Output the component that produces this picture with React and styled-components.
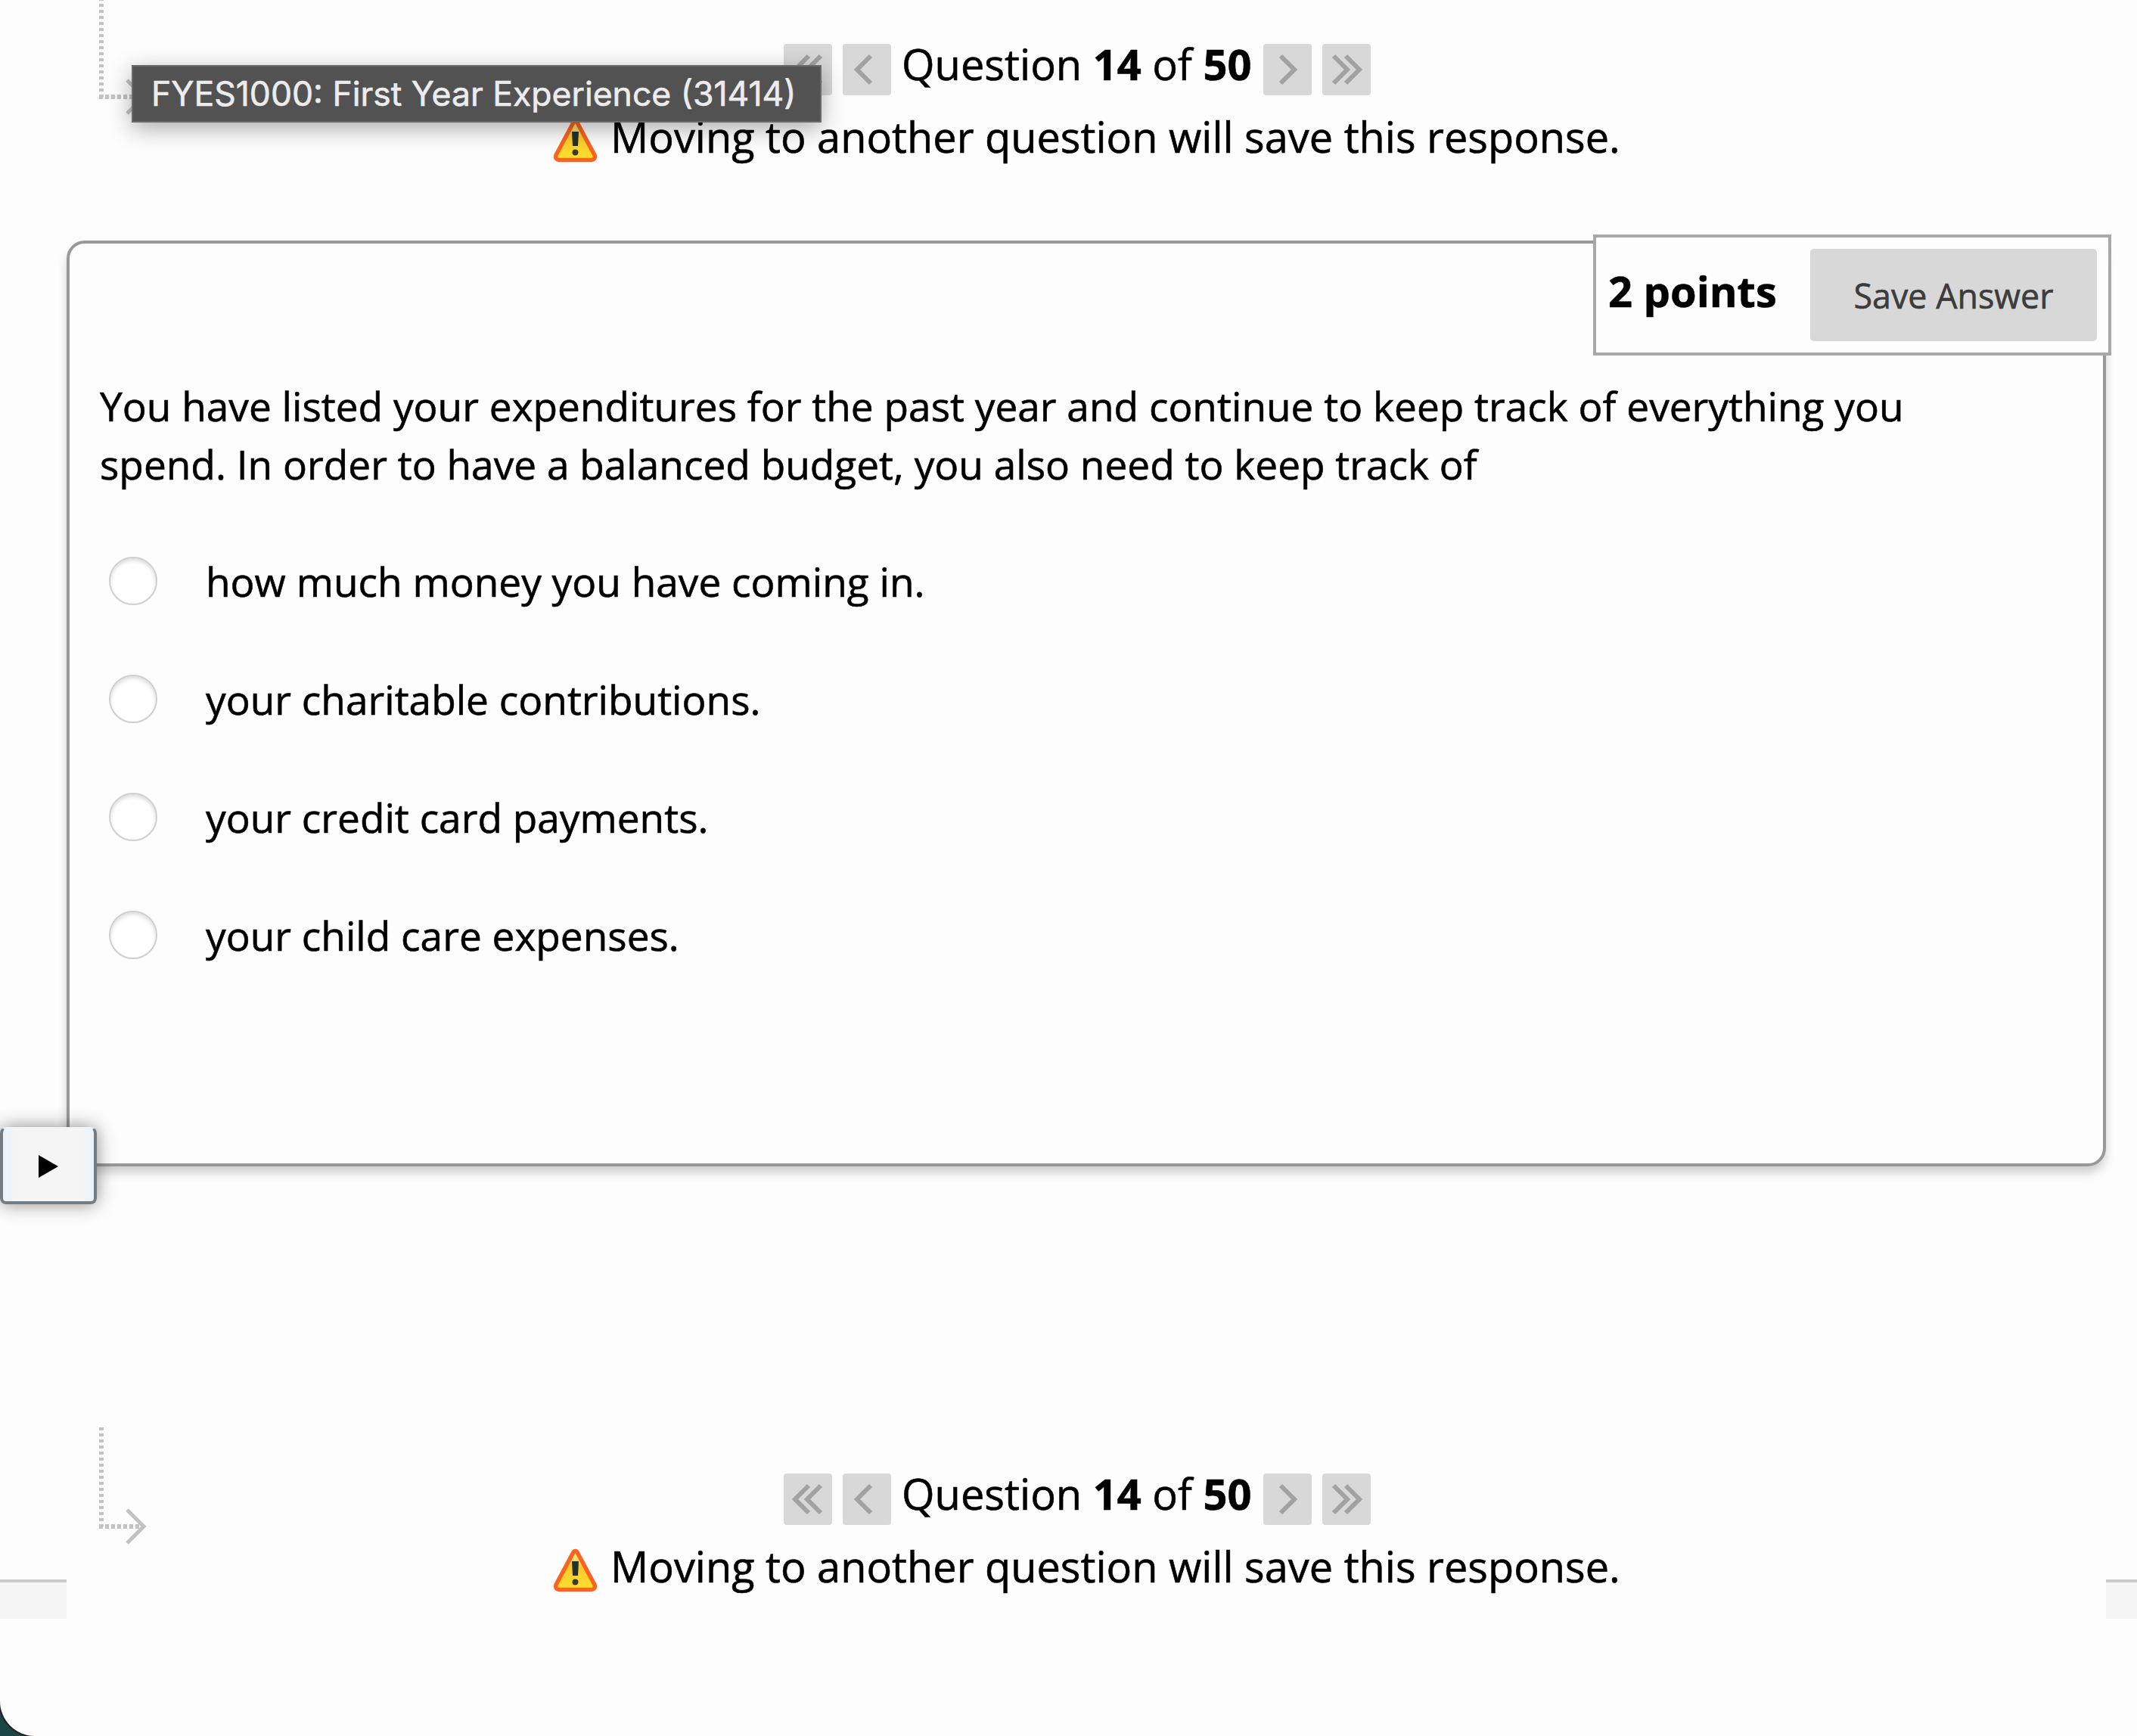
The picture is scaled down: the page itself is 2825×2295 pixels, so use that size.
import styled, { createGlobalStyle } from "styled-components";

const GlobalStyle = createGlobalStyle`
  * { box-sizing: border-box; }
  body {
    margin: 0;
    background: #1c4646;
    font-family: "Open Sans", "Noto Sans", sans-serif;
    font-size: 56px;
    color: #000;
    -webkit-text-stroke: 0.6px currentColor;
  }
`;

const Page = styled.div`
  position: relative;
  width: 2825px;
  height: 2295px;
  padding-top: 58px;
  background: #fdfdfd;
  border-bottom-left-radius: 46px;
  box-shadow: 0 0 0 2px #221c24;
  overflow: hidden;
`;

const Navigation = styled.nav`
  position: relative;
  height: 166px;
`;

const Arrow = styled.svg`
  position: absolute;
  left: 128px;
  top: -61px;
`;

const Pager = styled.div`
  display: flex;
  gap: 14px;
  padding-left: 1036px;
  height: 68px;
`;

const PagerButton = styled.button`
  display: flex;
  align-items: center;
  justify-content: center;
  width: 64px;
  height: 68px;
  padding: 0;
  border: 0;
  border-radius: 4px;
  background: #d8d8d8;
`;

const Counter = styled.div`
  width: 464px;
  line-height: 52px;
  white-space: nowrap;
`;

const Notice = styled.div`
  display: flex;
  align-items: center;
  height: 80px;
  margin-top: 14px;
  padding-left: 731px;
  gap: 17px;
  font-size: 55.9px;
  white-space: nowrap;

  svg {
    margin-top: 11px;
  }
`;

const Card = styled.main`
  position: relative;
  width: 2696px;
  height: 1224px;
  margin: 94px 0 0 88px;
  padding: 177px 40px 0 40px;
  border: 4px solid #999;
  border-radius: 24px;
  box-shadow: 0 9px 14px -1px rgba(0, 0, 0, 0.2);
  font-size: 53.2px;
`;

const Points = styled.div`
  position: absolute;
  right: -11px;
  top: -12px;
  display: flex;
  align-items: center;
  justify-content: space-between;
  width: 685px;
  height: 160px;
  padding: 0 15px 0 16px;
  border: 4px solid #a8a8a8;
  background: #fdfdfd;
`;

const PointsLabel = styled.span`
  padding-bottom: 13px;
  font-size: 56px;
  font-weight: 700;
`;

const SaveButton = styled.button`
  width: 379px;
  height: 122px;
  padding: 0;
  border: 0;
  border-radius: 5px;
  background: #d8d8d8;
  color: #3c3c3c;
  font-family: inherit;
  font-size: 44.8px;
`;

const Prompt = styled.p`
  margin: 0;
  line-height: 76.5px;
  white-space: nowrap;
`;

const Options = styled.div`
  display: flex;
  flex-direction: column;
  gap: 92px;
  margin: 84px 0 0 12px;
`;

const Option = styled.label`
  display: flex;
  align-items: center;
  gap: 64px;
  height: 64px;

  span {
    padding-top: 1px;
  }
`;

const Radio = styled.input`
  appearance: none;
  flex: none;
  width: 64px;
  height: 64px;
  margin: 0;
  border: 2px solid #cfcfcf;
  border-radius: 50%;
  background: #fff;
  box-shadow: inset 0 3px 5px rgba(0, 0, 0, 0.14);
`;

const MenuTab = styled.button`
  position: absolute;
  left: 0;
  top: 1490px;
  display: flex;
  align-items: center;
  justify-content: center;
  width: 128px;
  height: 102px;
  padding: 3px 0 0;
  border: 4px solid #747c84;
  border-top: 2px solid #f4f4f4;
  border-radius: 8px;
  background: linear-gradient(90deg, #ecf4fa 10px, #f5f5f5 14px, #f5f5f5 106px, #ecf4fa 110px);
  box-shadow: 0 0 24px rgba(0, 0, 0, 0.45);
`;

const Tooltip = styled.div`
  position: absolute;
  left: 174px;
  top: 86px;
  width: 912px;
  height: 76px;
  padding-left: 24px;
  border: 2px solid #6a6a6a;
  background: #525252;
  color: #ececec;
  font-family: Inter, sans-serif;
  font-size: 44.5px;
  line-height: 73px;
  white-space: nowrap;
  box-shadow: 0 8px 30px rgba(0, 0, 0, 0.32);
`;

const BottomNavigation = styled.div`
  margin-top: 406px;
`;

const FooterStrip = styled.div`
  position: absolute;
  top: 2088px;
  ${({ $side }) => $side}: 0;
  width: ${({ $width }) => $width}px;
  height: 52px;
  border-top: 4px solid #ccc;
  background: #f5f5f5;
`;

function Chevron({ d }) {
  return (
    <svg width="64" height="68" viewBox="0 0 64 68" fill="none" stroke="#a2a2a2" strokeWidth="6">
      <path d={d} />
    </svg>
  );
}

function WarningIcon() {
  return (
    <svg width="59" height="58" viewBox="0 0 59 58">
      <defs>
        <linearGradient id="warning" x1="0" y1="0" x2="0" y2="1">
          <stop offset="0" stopColor="#fff0a0" />
          <stop offset="0.4" stopColor="#fbc92c" />
          <stop offset="1" stopColor="#fde02c" />
        </linearGradient>
      </defs>
      <path
        d="M27 5Q29.5 2 32 5L55 48Q56.5 54 51 54.5H8Q2.5 54 4 48Z"
        fill="url(#warning)"
        stroke="#fa6420"
        strokeWidth="5.5"
        strokeLinejoin="round"
      />
      <path d="M25 17H34L33 36H26Z" fill="#26302a" />
      <circle cx="29.5" cy="44.5" r="4" fill="#3d3a20" />
    </svg>
  );
}

function QuestionNavigation() {
  return (
    <Navigation>
      <Arrow width="72" height="170" viewBox="0 0 72 170" fill="none" stroke="#c2c2c2">
        <path d="M6 0V131" strokeWidth="6" strokeDasharray="4 4" />
        <path d="M3 131H62" strokeWidth="6" strokeDasharray="5 3" />
        <path d="M40 109L62 131L40 153" strokeWidth="5" />
      </Arrow>
      <Pager>
        <PagerButton aria-label="First question">
          <Chevron d="M33 16L15 34L33 52M49 16L31 34L49 52" />
        </PagerButton>
        <PagerButton aria-label="Previous question">
          <Chevron d="M37 16L19 34L37 52" />
        </PagerButton>
        <Counter>
          Question <b>14</b> of <b>50</b>
        </Counter>
        <PagerButton aria-label="Next question">
          <Chevron d="M23 16L41 34L23 52" />
        </PagerButton>
        <PagerButton aria-label="Last question">
          <Chevron d="M15 16L33 34L15 52M31 16L49 34L31 52" />
        </PagerButton>
      </Pager>
      <Notice>
        <WarningIcon />
        Moving to another question will save this response.
      </Notice>
    </Navigation>
  );
}

const answers = [
  "how much money you have coming in.",
  "your charitable contributions.",
  "your credit card payments.",
  "your child care expenses.",
];

export default function App() {
  return (
    <>
      <GlobalStyle />
      <Page>
        <QuestionNavigation />
        <Card>
          <Points>
            <PointsLabel>2 points</PointsLabel>
            <SaveButton>Save Answer</SaveButton>
          </Points>
          <Prompt>
            You have listed your expenditures for the past year and continue to keep track of everything you
            <br />
            spend. In order to have a balanced budget, you also need to keep track of
          </Prompt>
          <Options>
            {answers.map((answer) => (
              <Option key={answer}>
                <Radio type="radio" name="answer" />
                <span>{answer}</span>
              </Option>
            ))}
          </Options>
        </Card>
        <BottomNavigation>
          <QuestionNavigation />
        </BottomNavigation>
        <FooterStrip $side="left" $width={88} />
        <FooterStrip $side="right" $width={41} />
        <MenuTab aria-label="Show menu">
          <svg width="26" height="30" viewBox="0 0 26 30">
            <path d="M0 0L26 15L0 30Z" />
          </svg>
        </MenuTab>
        <Tooltip>FYES1000: First Year Experience (31414)</Tooltip>
      </Page>
    </>
  );
}
